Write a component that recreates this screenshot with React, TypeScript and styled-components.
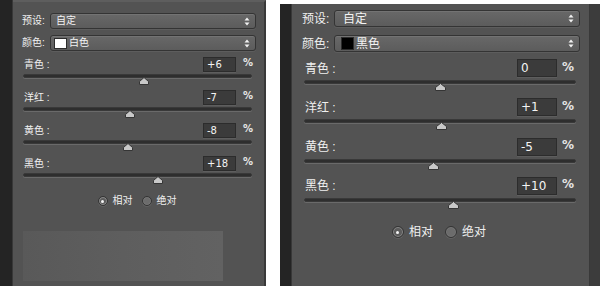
import React from 'react';
import styled, { createGlobalStyle } from 'styled-components';

const Global = createGlobalStyle`
  html, body { margin: 0; padding: 0; background: #ffffff; }
  body {
    width: 600px; height: 286px; overflow: hidden;
    font-family: "Liberation Sans", "Noto Sans CJK SC", sans-serif;
  }
`;

type Cfg = {
  top: number;
  stripW: number;
  panelW: number;
  borderR: number;
  fs: number;
  padTop: number;
  padL: number;
  padR: number;
  labelCol: number;
  selH: number;
  selGap: number;
  selTextPad: number;
  swatchW: number;
  swatchH: number;
  sliderGap: number;
  sPadL: number;
  sPadR: number;
  inputW: number;
  inputH: number;
  pctGap: number;
  pctW: number;
  trackGap: number;
  blockH: number;
  radioGap: number;
  radioSize: number;
  radioShift: number;
  thumbW: number;
};

const leftCfg: Cfg = {
  top: 0, stripW: 13, panelW: 251, borderR: 2, fs: 10,
  padTop: 13, padL: 9, padR: 8, labelCol: 28, selH: 16, selGap: 6, selTextPad: 6,
  swatchW: 13, swatchH: 11,
  sliderGap: 6, sPadL: 10, sPadR: 12, inputW: 33, inputH: 15, pctGap: 7, pctW: 9,
  trackGap: 2, blockH: 33, radioGap: 7, radioSize: 10, radioShift: -3, thumbW: 10,
};

const rightCfg: Cfg = {
  top: 4, stripW: 12, panelW: 297, borderR: 1, fs: 12,
  padTop: 6, padL: 10, padR: 9, labelCol: 32, selH: 17, selGap: 8, selTextPad: 9,
  swatchW: 13, swatchH: 13,
  sliderGap: 7, sPadL: 12, sPadR: 13, inputW: 40, inputH: 18, pctGap: 5, pctW: 14,
  trackGap: 3, blockH: 39.33, radioGap: 10, radioSize: 12, radioShift: -3, thumbW: 11,
};

const Page = styled.div`
  display: flex;
  width: 600px;
  height: 286px;
  background: #ffffff;
`;

const Column = styled.div<{ $top: number }>`
  display: flex;
  margin-top: ${p => p.$top}px;
  height: ${p => 286 - p.$top}px;
`;

const Strip = styled.div<{ $w: number }>`
  width: ${p => p.$w}px;
  background: #242424;
  border-right: 1px solid #383838;
  box-sizing: border-box;
`;

const Gap = styled.div`
  width: 14px;
  background: #ffffff;
`;

const OuterDark = styled.div`
  width: 10px;
  background: #3c3c3c;
`;

const Panel = styled.div<{ $c: Cfg }>`
  width: ${p => p.$c.panelW + p.$c.borderR}px;
  box-sizing: border-box;
  background: #535353;
  border-right: ${p => p.$c.borderR}px solid #393939;
  border-top: ${p => (p.$c.top === 0 ? '2px solid #5e5e5e' : 'none')};
  padding-top: ${p => p.$c.padTop - (p.$c.top === 0 ? 2 : 0)}px;
  display: flex;
  flex-direction: column;
  font-size: ${p => p.$c.fs}px;
  color: #e8e8e8;
`;

const SelectRow = styled.div<{ $c: Cfg; $first?: boolean }>`
  display: grid;
  grid-template-columns: ${p => p.$c.labelCol}px 1fr;
  align-items: center;
  padding: 0 ${p => p.$c.padR}px 0 ${p => p.$c.padL}px;
  margin-top: ${p => (p.$first ? 0 : p.$c.selGap)}px;
  height: ${p => p.$c.selH}px;
`;

const Label = styled.span`
  white-space: nowrap;
  line-height: 1;
  color: #f0f0f0;
`;

const SelectBox = styled.div<{ $c: Cfg }>`
  height: ${p => p.$c.selH}px;
  box-sizing: border-box;
  border: 1px solid #343434;
  border-radius: 3px;
  background: linear-gradient(#686868, #5c5c5c);
  box-shadow: inset 0 1px 0 #737373, 0 1px 0 #5d5d5d;
  display: flex;
  align-items: center;
  padding: 0 5px 0 ${p => p.$c.selTextPad - 1}px;
  gap: 2px;
`;

const SelectText = styled.span`
  flex: 1;
  line-height: 1;
  color: #f4f4f4;
`;

const Swatch = styled.span<{ $c: Cfg; $color: string }>`
  width: ${p => p.$c.swatchW}px;
  height: ${p => p.$c.swatchH}px;
  background: ${p => p.$color};
  border: 1px solid #2c2c2c;
  box-sizing: border-box;
  margin-left: -2px;
`;

const Arrows = () => (
  <svg width="6" height="9" viewBox="0 0 6 9">
    <path d="M3 0.5 L5.5 3.5 L0.5 3.5 Z" fill="#f2f2f2" />
    <path d="M3 8.5 L5.5 5.5 L0.5 5.5 Z" fill="#f2f2f2" />
  </svg>
);

const Sliders = styled.div<{ $c: Cfg }>`
  display: flex;
  flex-direction: column;
  margin-top: ${p => p.$c.sliderGap}px;
  padding: 0 ${p => p.$c.sPadR}px 0 ${p => p.$c.sPadL}px;
`;

const Block = styled.div<{ $c: Cfg }>`
  height: ${p => p.$c.blockH}px;
  display: flex;
  flex-direction: column;
`;

const Header = styled.div<{ $c: Cfg }>`
  display: flex;
  align-items: center;
  height: ${p => p.$c.inputH}px;
  padding-left: 1px;
`;

const SliderLabel = styled(Label)`
  flex: 1;
  margin-top: 1px;
`;

const Input = styled.div<{ $c: Cfg }>`
  width: ${p => p.$c.inputW}px;
  height: ${p => p.$c.inputH}px;
  box-sizing: border-box;
  background: #3b3b3b;
  border: 1px solid #2c2c2c;
  box-shadow: 0 1px 0 #5e5e5e;
  display: flex;
  align-items: center;
  padding-left: 3px;
  color: #f4f4f4;
  font-family: "DejaVu Sans", "Liberation Sans", sans-serif;
  font-size: ${p => p.$c.fs}px;
  line-height: 1;
`;

const Pct = styled.span<{ $c: Cfg }>`
  width: ${p => p.$c.pctW}px;
  margin-left: ${p => p.$c.pctGap}px;
  margin-top: -3px;
  line-height: 1;
  font-family: "DejaVu Sans", "Liberation Sans", sans-serif;
  font-weight: bold;
  font-size: ${p => p.$c.fs}px;
  color: #e6e6e6;
`;

const Track = styled.div<{ $c: Cfg }>`
  position: relative;
  margin-top: ${p => p.$c.trackGap}px;
  height: 4px;
  box-sizing: border-box;
  border-radius: 2px;
  background: #2e2e2e;
  border: 1px solid #393939;
  box-shadow: 0 1px 0 #6a6a6a;
`;

const ThumbHolder = styled.div<{ $w: number }>`
  position: absolute;
  top: 2px;
  width: ${p => p.$w}px;
  margin-left: ${p => -p.$w / 2}px;
  line-height: 0;
`;

const Thumb = ({ w }: { w: number }) => (
  <svg width={w} height={8} viewBox={`0 0 ${w} 8`}>
    <path
      d={`M${w / 2} 0.5 L${w - 0.5} 4.5 L${w - 0.5} 7.5 L0.5 7.5 L0.5 4.5 Z`}
      fill="#c8c8c8"
      stroke="#353535"
      strokeWidth="1"
      strokeLinejoin="round"
    />
  </svg>
);

const RadioRow = styled.div<{ $c: Cfg }>`
  display: flex;
  justify-content: center;
  align-items: center;
  gap: ${p => p.$c.radioGap + 2}px;
  margin-top: ${p => p.$c.radioGap}px;
  margin-left: ${p => p.$c.radioShift}px;
`;

const RadioItem = styled.label<{ $c: Cfg }>`
  display: flex;
  align-items: center;
  gap: 5px;
  line-height: 1;
  color: #f0f0f0;
  font-size: ${p => p.$c.fs}px;
`;

const RadioDot = styled.span<{ $c: Cfg; $on: boolean }>`
  width: ${p => p.$c.radioSize}px;
  height: ${p => p.$c.radioSize}px;
  box-sizing: border-box;
  border-radius: 50%;
  border: 1px solid #333333;
  background: ${p => (p.$on ? '#5c5c5c' : '#6c6c6c')};
  box-shadow: 0 1px 0 #626262, inset 0 0 0 1px ${p => (p.$on ? '#8a8a8a' : '#767676')};
  display: flex;
  align-items: center;
  justify-content: center;
  &::after {
    content: '';
    display: ${p => (p.$on ? 'block' : 'none')};
    width: 3px;
    height: 3px;
    border-radius: 50%;
    background: #f6f6f6;
  }
`;

const Preview = styled.div`
  margin: 25px 0 0 10px;
  width: 200px;
  height: 50px;
  background: linear-gradient(90deg, #595959, #5e5e5e 50%, #626262);
`;

type Slider = { name: string; value: string };

type PanelProps = {
  c: Cfg;
  color: { name: string; swatch: string };
  sliders: Slider[];
  preview?: boolean;
};

const SliderBlock = ({ c, s }: { c: Cfg; s: Slider }) => {
  const v = parseInt(s.value, 10);
  const pct = 50 + v / 2;
  return (
    <Block $c={c}>
      <Header $c={c}>
        <SliderLabel>{s.name}</SliderLabel>
        <Input $c={c}>{s.value}</Input>
        <Pct $c={c}>%</Pct>
      </Header>
      <Track $c={c}>
        <ThumbHolder $w={c.thumbW} style={{ left: `${pct}%` }}>
          <Thumb w={c.thumbW} />
        </ThumbHolder>
      </Track>
    </Block>
  );
};

const AdjustPanel = ({ c, color, sliders, preview }: PanelProps) => (
  <Panel $c={c}>
    <SelectRow $c={c} $first>
      <Label>预设:</Label>
      <SelectBox $c={c}>
        <SelectText>自定</SelectText>
        <Arrows />
      </SelectBox>
    </SelectRow>
    <SelectRow $c={c}>
      <Label>颜色:</Label>
      <SelectBox $c={c}>
        <Swatch $c={c} $color={color.swatch} />
        <SelectText>{color.name}</SelectText>
        <Arrows />
      </SelectBox>
    </SelectRow>
    <Sliders $c={c}>
      {sliders.map(s => (
        <SliderBlock key={s.name} c={c} s={s} />
      ))}
    </Sliders>
    <RadioRow $c={c}>
      <RadioItem $c={c}>
        <RadioDot $c={c} $on />
        相对
      </RadioItem>
      <RadioItem $c={c}>
        <RadioDot $c={c} $on={false} />
        绝对
      </RadioItem>
    </RadioRow>
    {preview && <Preview />}
  </Panel>
);

export default function App() {
  return (
    <>
      <Global />
      <Page>
        <Column $top={leftCfg.top}>
          <Strip $w={leftCfg.stripW} />
          <AdjustPanel
            c={leftCfg}
            color={{ name: '白色', swatch: '#ffffff' }}
            sliders={[
              { name: '青色 :', value: '+6' },
              { name: '洋红 :', value: '-7' },
              { name: '黄色 :', value: '-8' },
              { name: '黑色 :', value: '+18' },
            ]}
            preview
          />
        </Column>
        <Gap />
        <Column $top={rightCfg.top}>
          <Strip $w={rightCfg.stripW} />
          <AdjustPanel
            c={rightCfg}
            color={{ name: '黑色', swatch: '#000000' }}
            sliders={[
              { name: '青色 :', value: '0' },
              { name: '洋红 :', value: '+1' },
              { name: '黄色 :', value: '-5' },
              { name: '黑色 :', value: '+10' },
            ]}
          />
          <OuterDark />
        </Column>
      </Page>
    </>
  );
}
